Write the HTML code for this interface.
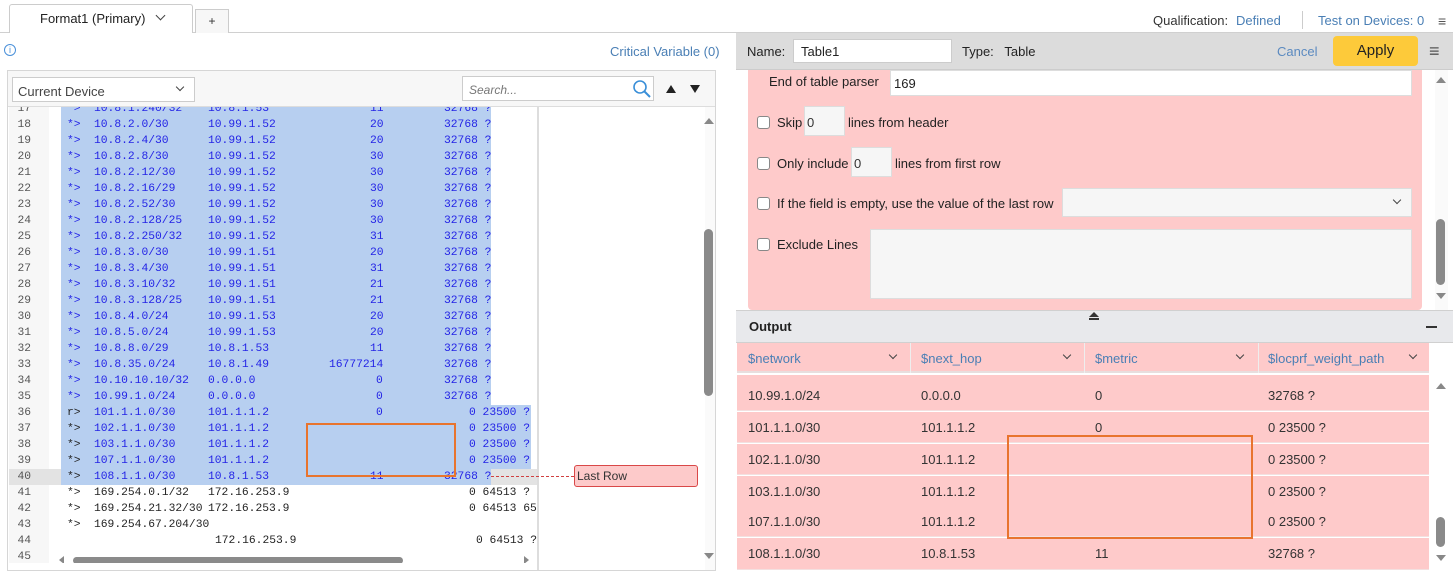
<!DOCTYPE html>
<html><head><meta charset="utf-8">
<style>
*{box-sizing:border-box;margin:0;padding:0}
body{width:1453px;height:573px;overflow:hidden;background:#fff;font-family:"Liberation Sans",sans-serif;font-size:13px;color:#333;position:relative}
.a{position:absolute}
.mono{font-family:"Liberation Mono","DejaVu Sans Mono",monospace;font-size:11.3px}
.r{position:absolute;left:0;width:537px;height:16px;line-height:16px}
.r span{position:absolute;white-space:pre}
.ln{left:8px;width:40px;text-align:right;padding-right:18px;color:#555}
.hl{position:absolute;top:0;height:16px;left:60px;background:#b7cff0}
.blue span.t{color:#2323e6}
.cb{position:absolute;width:13px;height:13px;border:1px solid #888;border-radius:3px;background:#fff}
.inp{position:absolute;background:#f6f6f6;border:1px solid #ddd}
.tr{position:absolute;left:737px;width:692px;height:31px;border-bottom:1px solid #f3e0e0;background:#fecaca}
.tr span{position:absolute;top:8px;font-size:13px;color:#333}
.chev{position:absolute;width:7px;height:7px;border-right:1.5px solid #444;border-bottom:1.5px solid #444;transform:rotate(45deg)}
</style></head><body>
<!-- top tabs -->
<div class="a" style="left:0;top:32px;width:1453px;height:1px;background:#d0d0d0"></div>
<div class="a" style="left:9px;top:4px;width:184px;height:29px;border:1px solid #ccc;border-bottom:none;background:#fff;border-radius:3px 3px 0 0"></div>
<div class="a" style="left:40px;top:11px;font-size:13px;color:#222">Format1 (Primary)</div>
<div class="chev" style="left:157px;top:12px"></div>
<div class="a" style="left:195px;top:9px;width:34px;height:24px;border:1px solid #ccc;border-bottom:none;background:#f7f7f7;text-align:center;font-size:12px;line-height:22px">+</div>
<div class="a" style="left:1153px;top:13px;font-size:13px;color:#333">Qualification:</div>
<div class="a" style="left:1236px;top:13px;font-size:13px;color:#4a7fb5">Defined</div>
<div class="a" style="left:1302px;top:11px;width:1px;height:18px;background:#ccc"></div>
<div class="a" style="left:1318px;top:13px;font-size:13px;color:#4a7fb5">Test on Devices: 0</div>
<div class="a" style="left:1438px;top:13px;font-size:14px;color:#555">≡</div>

<!-- left header -->
<div class="a" style="left:4px;top:44px;width:12px;height:12px;border:1px solid #4a90d9;border-radius:50%;color:#4a90d9;font-size:9px;text-align:center;line-height:10px">i</div>
<div class="a" style="left:610px;top:44px;font-size:13px;color:#4a7fb5">Critical Variable (0)</div>

<!-- left panel -->
<div class="a" style="left:7px;top:70px;width:709px;height:501px;border:1px solid #d6d6d6;background:#fff;overflow:hidden">
 <div class="a" style="left:0;top:0;width:709px;height:36px;background:#f7f7f7;border-bottom:1px solid #ddd"></div>
 <div class="a" style="left:4px;top:6px;width:183px;height:25px;border:1px solid #ccc;background:#fff;font-size:13px;color:#444;padding:6px 0 0 5px">Current Device</div>
 <div class="chev" style="left:169px;top:13px;width:6px;height:6px"></div>
 <div class="a" style="left:454px;top:5px;width:192px;height:25px;border:1px solid #ccc;background:#fff;font-size:12px;color:#777;font-style:italic;padding:6px 0 0 6px">Search...</div>
 <svg class="a" style="left:624px;top:8px" width="20" height="20"><circle cx="8" cy="8" r="6" fill="none" stroke="#3a8fd8" stroke-width="1.6"/><line x1="12.5" y1="12.5" x2="18" y2="18" stroke="#3a8fd8" stroke-width="2"/></svg>
 <div class="a" style="left:658px;top:14px;width:0;height:0;border-left:5px solid transparent;border-right:5px solid transparent;border-bottom:8px solid #222"></div>
 <div class="a" style="left:682px;top:14px;width:0;height:0;border-left:5px solid transparent;border-right:5px solid transparent;border-top:8px solid #222"></div>

 <div class="a mono" style="left:-7px;top:36px;width:537px;height:456px;overflow:hidden">
  <div class="a" style="left:8px;top:0;width:40px;height:456px;background:#f7f7f7"></div>
  <div style="position:absolute;left:0;top:-6px;width:537px">
   <div class="r blue" style="top:0"><div class="hl" style="width:430px"></div><span class="ln">17</span><span class="t" style="left:66px">*></span><span class="t" style="left:93px">10.8.1.240/32</span><span class="t" style="left:207px">10.8.1.53</span><span class="t" style="left:369px">11</span><span class="t" style="left:443px">32768 ?</span></div>
   <div class="r blue" style="top:16px"><div class="hl" style="width:430px"></div><span class="ln">18</span><span class="t" style="left:66px">*></span><span class="t" style="left:93px">10.8.2.0/30</span><span class="t" style="left:207px">10.99.1.52</span><span class="t" style="left:369px">20</span><span class="t" style="left:443px">32768 ?</span></div>
   <div class="r blue" style="top:32px"><div class="hl" style="width:430px"></div><span class="ln">19</span><span class="t" style="left:66px">*></span><span class="t" style="left:93px">10.8.2.4/30</span><span class="t" style="left:207px">10.99.1.52</span><span class="t" style="left:369px">20</span><span class="t" style="left:443px">32768 ?</span></div>
   <div class="r blue" style="top:48px"><div class="hl" style="width:430px"></div><span class="ln">20</span><span class="t" style="left:66px">*></span><span class="t" style="left:93px">10.8.2.8/30</span><span class="t" style="left:207px">10.99.1.52</span><span class="t" style="left:369px">30</span><span class="t" style="left:443px">32768 ?</span></div>
   <div class="r blue" style="top:64px"><div class="hl" style="width:430px"></div><span class="ln">21</span><span class="t" style="left:66px">*></span><span class="t" style="left:93px">10.8.2.12/30</span><span class="t" style="left:207px">10.99.1.52</span><span class="t" style="left:369px">30</span><span class="t" style="left:443px">32768 ?</span></div>
   <div class="r blue" style="top:80px"><div class="hl" style="width:430px"></div><span class="ln">22</span><span class="t" style="left:66px">*></span><span class="t" style="left:93px">10.8.2.16/29</span><span class="t" style="left:207px">10.99.1.52</span><span class="t" style="left:369px">30</span><span class="t" style="left:443px">32768 ?</span></div>
   <div class="r blue" style="top:96px"><div class="hl" style="width:430px"></div><span class="ln">23</span><span class="t" style="left:66px">*></span><span class="t" style="left:93px">10.8.2.52/30</span><span class="t" style="left:207px">10.99.1.52</span><span class="t" style="left:369px">30</span><span class="t" style="left:443px">32768 ?</span></div>
   <div class="r blue" style="top:112px"><div class="hl" style="width:430px"></div><span class="ln">24</span><span class="t" style="left:66px">*></span><span class="t" style="left:93px">10.8.2.128/25</span><span class="t" style="left:207px">10.99.1.52</span><span class="t" style="left:369px">30</span><span class="t" style="left:443px">32768 ?</span></div>
   <div class="r blue" style="top:128px"><div class="hl" style="width:430px"></div><span class="ln">25</span><span class="t" style="left:66px">*></span><span class="t" style="left:93px">10.8.2.250/32</span><span class="t" style="left:207px">10.99.1.52</span><span class="t" style="left:369px">31</span><span class="t" style="left:443px">32768 ?</span></div>
   <div class="r blue" style="top:144px"><div class="hl" style="width:430px"></div><span class="ln">26</span><span class="t" style="left:66px">*></span><span class="t" style="left:93px">10.8.3.0/30</span><span class="t" style="left:207px">10.99.1.51</span><span class="t" style="left:369px">20</span><span class="t" style="left:443px">32768 ?</span></div>
   <div class="r blue" style="top:160px"><div class="hl" style="width:430px"></div><span class="ln">27</span><span class="t" style="left:66px">*></span><span class="t" style="left:93px">10.8.3.4/30</span><span class="t" style="left:207px">10.99.1.51</span><span class="t" style="left:369px">31</span><span class="t" style="left:443px">32768 ?</span></div>
   <div class="r blue" style="top:176px"><div class="hl" style="width:430px"></div><span class="ln">28</span><span class="t" style="left:66px">*></span><span class="t" style="left:93px">10.8.3.10/32</span><span class="t" style="left:207px">10.99.1.51</span><span class="t" style="left:369px">21</span><span class="t" style="left:443px">32768 ?</span></div>
   <div class="r blue" style="top:192px"><div class="hl" style="width:430px"></div><span class="ln">29</span><span class="t" style="left:66px">*></span><span class="t" style="left:93px">10.8.3.128/25</span><span class="t" style="left:207px">10.99.1.51</span><span class="t" style="left:369px">21</span><span class="t" style="left:443px">32768 ?</span></div>
   <div class="r blue" style="top:208px"><div class="hl" style="width:430px"></div><span class="ln">30</span><span class="t" style="left:66px">*></span><span class="t" style="left:93px">10.8.4.0/24</span><span class="t" style="left:207px">10.99.1.53</span><span class="t" style="left:369px">20</span><span class="t" style="left:443px">32768 ?</span></div>
   <div class="r blue" style="top:224px"><div class="hl" style="width:430px"></div><span class="ln">31</span><span class="t" style="left:66px">*></span><span class="t" style="left:93px">10.8.5.0/24</span><span class="t" style="left:207px">10.99.1.53</span><span class="t" style="left:369px">20</span><span class="t" style="left:443px">32768 ?</span></div>
   <div class="r blue" style="top:240px"><div class="hl" style="width:430px"></div><span class="ln">32</span><span class="t" style="left:66px">*></span><span class="t" style="left:93px">10.8.8.0/29</span><span class="t" style="left:207px">10.8.1.53</span><span class="t" style="left:369px">11</span><span class="t" style="left:443px">32768 ?</span></div>
   <div class="r blue" style="top:256px"><div class="hl" style="width:430px"></div><span class="ln">33</span><span class="t" style="left:66px">*></span><span class="t" style="left:93px">10.8.35.0/24</span><span class="t" style="left:207px">10.8.1.49</span><span class="t" style="left:328px">16777214</span><span class="t" style="left:443px">32768 ?</span></div>
   <div class="r blue" style="top:272px"><div class="hl" style="width:430px"></div><span class="ln">34</span><span class="t" style="left:66px">*></span><span class="t" style="left:93px">10.10.10.10/32</span><span class="t" style="left:207px">0.0.0.0</span><span class="t" style="left:375px">0</span><span class="t" style="left:443px">32768 ?</span></div>
   <div class="r blue" style="top:288px"><div class="hl" style="width:430px"></div><span class="ln">35</span><span class="t" style="left:66px">*></span><span class="t" style="left:93px">10.99.1.0/24</span><span class="t" style="left:207px">0.0.0.0</span><span class="t" style="left:375px">0</span><span class="t" style="left:443px">32768 ?</span></div>
   <div class="r blue" style="top:304px"><div class="hl" style="width:470px"></div><span class="ln">36</span><span style="left:66px;color:#222">r></span><span class="t" style="left:93px">101.1.1.0/30</span><span class="t" style="left:207px">101.1.1.2</span><span class="t" style="left:375px">0</span><span class="t" style="left:468px">0 23500 ?</span></div>
   <div class="r blue" style="top:320px"><div class="hl" style="width:470px"></div><span class="ln">37</span><span style="left:66px;color:#222">*></span><span class="t" style="left:93px">102.1.1.0/30</span><span class="t" style="left:207px">101.1.1.2</span><span class="t" style="left:468px">0 23500 ?</span></div>
   <div class="r blue" style="top:336px"><div class="hl" style="width:470px"></div><span class="ln">38</span><span style="left:66px;color:#222">*></span><span class="t" style="left:93px">103.1.1.0/30</span><span class="t" style="left:207px">101.1.1.2</span><span class="t" style="left:468px">0 23500 ?</span></div>
   <div class="r blue" style="top:352px"><div class="hl" style="width:470px"></div><span class="ln">39</span><span style="left:66px;color:#222">*></span><span class="t" style="left:93px">107.1.1.0/30</span><span class="t" style="left:207px">101.1.1.2</span><span class="t" style="left:468px">0 23500 ?</span></div>
   <div class="r blue" style="top:368px"><div style="position:absolute;left:8px;width:529px;height:16px;background:#e3e3e3"></div><div class="hl" style="width:430px"></div><span class="ln">40</span><span style="left:66px;color:#222">*></span><span class="t" style="left:93px">108.1.1.0/30</span><span class="t" style="left:207px">10.8.1.53</span><span class="t" style="left:369px">11</span><span class="t" style="left:443px">32768 ?</span></div>
   <div class="r" style="top:384px;color:#222"><span class="ln">41</span><span style="left:66px">*></span><span style="left:93px">169.254.0.1/32</span><span style="left:207px">172.16.253.9</span><span style="left:468px">0 64513 ?</span></div>
   <div class="r" style="top:400px;color:#222"><span class="ln">42</span><span style="left:66px">*></span><span style="left:93px">169.254.21.32/30</span><span style="left:207px">172.16.253.9</span><span style="left:468px">0 64513 65</span></div>
   <div class="r" style="top:416px;color:#222"><span class="ln">43</span><span style="left:66px">*></span><span style="left:93px">169.254.67.204/30</span></div>
   <div class="r" style="top:432px;color:#222"><span class="ln">44</span><span style="left:214px">172.16.253.9</span><span style="left:475px">0 64513 ?</span></div>
   <div class="r" style="top:448px;color:#222"><span class="ln">45</span></div>
  </div>
  <div class="a" style="left:305px;top:316px;width:150px;height:54px;border:2px solid #e8742e"></div>
  <div class="a" style="left:60px;top:448px;width:470px;height:8px;background:#fff"></div>
  <div class="a" style="left:72px;top:450px;width:330px;height:7px;border-radius:4px;background:#8a8a8a"></div>
  <div class="a" style="left:58px;top:449px;border-top:4px solid transparent;border-bottom:4px solid transparent;border-right:5px solid #888"></div>
  <div class="a" style="left:523px;top:449px;border-top:4px solid transparent;border-bottom:4px solid transparent;border-left:5px solid #888"></div>
 </div>
 <div class="a" style="left:529px;top:36px;width:2px;height:465px;background:#ddd"></div>
 <div class="a" style="left:697px;top:36px;width:11px;height:465px;background:#fafafa"></div>
 <div class="a" style="left:696px;top:47px;border-left:5px solid transparent;border-right:5px solid transparent;border-bottom:6px solid #888"></div>
 <div class="a" style="left:696px;top:158px;width:9px;height:167px;border-radius:5px;background:#8a8a8a"></div>
 <div class="a" style="left:696px;top:482px;border-left:5px solid transparent;border-right:5px solid transparent;border-top:6px solid #888"></div>
 <div class="a" style="left:483px;top:405px;width:83px;border-top:1px dashed #d04040"></div>
 <div class="a" style="left:566px;top:394px;width:124px;height:22px;background:#fdcaca;border:1px solid #d94848;border-radius:3px;font-size:12px;color:#333;padding:3px 0 0 2px">Last Row</div>
</div>

<!-- right panel -->
<div class="a" style="left:736px;top:33px;width:717px;height:540px;background:#fff"></div>
<div class="a" style="left:736px;top:33px;width:717px;height:37px;background:#dcdcdc;border-bottom:1px solid #ccc"></div>
<div class="a" style="left:747px;top:44px;font-size:13px;color:#222">Name:</div>
<div class="a" style="left:793px;top:39px;width:159px;height:24px;background:#fff;border:1px solid #ccc;font-size:13px;padding:4px 0 0 7px;color:#222">Table1</div>
<div class="a" style="left:962px;top:44px;font-size:13px;color:#222">Type:&nbsp;&nbsp; Table</div>
<div class="a" style="left:1277px;top:44px;font-size:13px;color:#5b8ac0">Cancel</div>
<div class="a" style="left:1333px;top:36px;width:85px;height:30px;background:#fdca3a;border-radius:4px;font-size:15px;color:#222;text-align:center;line-height:30px">Apply</div>
<div class="a" style="left:1429px;top:41px;font-size:18px;color:#555">≡</div>

<div class="a" style="left:748px;top:70px;width:674px;height:240px;background:#fecaca;border-radius:0 0 4px 4px"></div>
<div class="a" style="left:769px;top:74px;font-size:13px;color:#222">End of table parser</div>
<div class="a" style="left:890px;top:70px;width:522px;height:26px;background:#fff;border:1px solid #ddd;font-size:13px;padding:5px 0 0 3px;color:#222">169</div>
<div class="cb" style="left:757px;top:116px"></div>
<div class="a" style="left:777px;top:115px;font-size:13px;color:#222">Skip</div>
<div class="inp" style="left:804px;top:106px;width:41px;height:30px;font-size:13px;padding:8px 0 0 2px">0</div>
<div class="a" style="left:848px;top:115px;font-size:13px;color:#222">lines from header</div>
<div class="cb" style="left:757px;top:157px"></div>
<div class="a" style="left:777px;top:156px;font-size:13px;color:#222">Only include</div>
<div class="inp" style="left:851px;top:147px;width:41px;height:30px;font-size:13px;padding:8px 0 0 2px">0</div>
<div class="a" style="left:895px;top:156px;font-size:13px;color:#222">lines from first row</div>
<div class="cb" style="left:757px;top:197px"></div>
<div class="a" style="left:777px;top:196px;font-size:13px;color:#222">If the field is empty, use the value of the last row</div>
<div class="inp" style="left:1062px;top:188px;width:350px;height:29px"></div>
<div class="chev" style="left:1394px;top:197px;width:6px;height:6px;border-width:1.2px"></div>
<div class="cb" style="left:757px;top:238px"></div>
<div class="a" style="left:777px;top:237px;font-size:13px;color:#222">Exclude Lines</div>
<div class="inp" style="left:870px;top:229px;width:542px;height:70px"></div>
<div class="a" style="left:1435px;top:70px;width:13px;height:240px;background:#fafafa"></div>
<div class="a" style="left:1436px;top:77px;border-left:5px solid transparent;border-right:5px solid transparent;border-bottom:6px solid #888"></div>
<div class="a" style="left:1436px;top:219px;width:9px;height:66px;border-radius:5px;background:#8a8a8a"></div>
<div class="a" style="left:1436px;top:293px;border-left:5px solid transparent;border-right:5px solid transparent;border-top:6px solid #888"></div>

<div class="a" style="left:736px;top:310px;width:717px;height:33px;background:#e8e9ec;border-top:1px solid #d0d0d0;border-bottom:1px solid #d0d0d0"></div>
<div class="a" style="left:1089px;top:312px;border-left:5px solid transparent;border-right:5px solid transparent;border-bottom:5px solid #333"></div>
<div class="a" style="left:1089px;top:318px;width:10px;height:1.5px;background:#333"></div>
<div class="a" style="left:749px;top:319px;font-size:13px;color:#222;font-weight:bold">Output</div>
<div class="a" style="left:1426px;top:326px;width:11px;height:1.5px;background:#333"></div>

<div class="a" style="left:737px;top:343px;width:692px;height:30px;background:#fecaca;border-bottom:2px solid #e8dede"></div>
<div class="a" style="left:910px;top:343px;width:1px;height:30px;background:#eee"></div>
<div class="a" style="left:1084px;top:343px;width:1px;height:30px;background:#eee"></div>
<div class="a" style="left:1258px;top:343px;width:1px;height:30px;background:#eee"></div>
<div class="a" style="left:748px;top:351px;font-size:13px;color:#4a7fb5">$network</div>
<div class="a" style="left:921px;top:351px;font-size:13px;color:#4a7fb5">$next_hop</div>
<div class="a" style="left:1095px;top:351px;font-size:13px;color:#4a7fb5">$metric</div>
<div class="a" style="left:1268px;top:351px;font-size:13px;color:#4a7fb5">$locprf_weight_path</div>
<div class="chev" style="left:890px;top:352px;width:6px;height:6px;border-width:1.3px"></div>
<div class="chev" style="left:1064px;top:352px;width:6px;height:6px;border-width:1.3px"></div>
<div class="chev" style="left:1237px;top:352px;width:6px;height:6px;border-width:1.3px"></div>
<div class="chev" style="left:1410px;top:352px;width:6px;height:6px;border-width:1.3px"></div>
<div class="a" style="left:737px;top:375px;width:692px;height:5px;background:#fecaca"></div>
<div class="tr" style="top:380px"><span style="left:11px">10.99.1.0/24</span><span style="left:184px">0.0.0.0</span><span style="left:358px">0</span><span style="left:531px">32768 ?</span></div>
<div class="tr" style="top:412px"><span style="left:11px">101.1.1.0/30</span><span style="left:184px">101.1.1.2</span><span style="left:358px">0</span><span style="left:531px">0 23500 ?</span></div>
<div class="tr" style="top:444px"><span style="left:11px">102.1.1.0/30</span><span style="left:184px">101.1.1.2</span><span style="left:531px">0 23500 ?</span></div>
<div class="tr" style="top:476px"><span style="left:11px">103.1.1.0/30</span><span style="left:184px">101.1.1.2</span><span style="left:531px">0 23500 ?</span></div>
<div class="tr" style="top:506px"><span style="left:11px">107.1.1.0/30</span><span style="left:184px">101.1.1.2</span><span style="left:531px">0 23500 ?</span></div>
<div class="tr" style="top:538px;height:32px"><span style="left:11px">108.1.1.0/30</span><span style="left:184px">10.8.1.53</span><span style="left:358px">11</span><span style="left:531px">32768 ?</span></div>
<div class="a" style="left:1007px;top:435px;width:246px;height:104px;border:2px solid #e8742e"></div>
<div class="a" style="left:1436px;top:383px;border-left:5px solid transparent;border-right:5px solid transparent;border-bottom:6px solid #888"></div>
<div class="a" style="left:1436px;top:517px;width:9px;height:30px;border-radius:5px;background:#8a8a8a"></div>
<div class="a" style="left:1436px;top:555px;border-left:5px solid transparent;border-right:5px solid transparent;border-top:6px solid #888"></div>
</body></html>
